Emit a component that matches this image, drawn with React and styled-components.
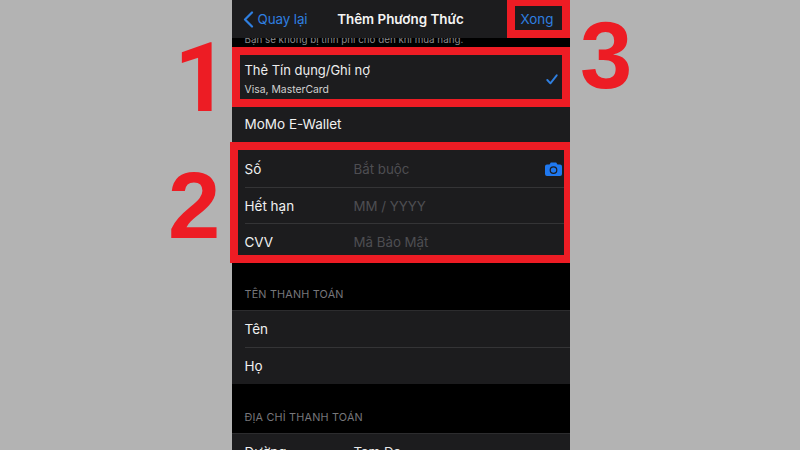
import React from "react";
import styled, { createGlobalStyle } from "styled-components";

const Global = createGlobalStyle`
  html, body { margin: 0; padding: 0; background: #b3b3b3; }
  body { font-family: Inter, "Noto Sans", sans-serif; -webkit-font-smoothing: antialiased; }
`;
const Stage = styled.div`
  position: relative; width: 800px; height: 450px; overflow: hidden;
  display: flex; justify-content: center; background: #b3b3b3;
`;
const Phone = styled.div`
  width: 338px; height: 450px; margin-left: 1px; background: #000; overflow: hidden;
  display: flex; flex-direction: column; flex: none;
`;
const Nav = styled.div`
  height: 38px; flex: none; background: #1c1c1e; display: flex; align-items: center;
  padding: 0 16px 0 11px; justify-content: space-between;
`;
const Back = styled.div`
  display: flex; align-items: center; gap: 4px; color: #2f7fe0; font-size: 13.4px; letter-spacing: -.1px;
`;
const Title = styled.div`
  color: #f4f4f4; font-size: 13.4px; font-weight: 600; margin-right: 27px; white-space: nowrap;
`;
const Done = styled.div`
  color: #2f7fe0; font-size: 13.4px;
`;
const Clip = styled.div`
  height: 9px; flex: none; overflow: hidden; background: #000; padding-left: 13px;
  color: #8a8a8e; font-size: 9.8px; line-height: 9px; white-space: nowrap;
`;
const ClipText = styled.div`
  margin-top: -3px;
`;
const Card = styled.div`
  background: #1c1c1e; flex: none; display: flex; flex-direction: column;
  border-top: ${p => (p.$line ? "1px solid #2c2c2e" : "none")};
`;
const Payment = styled.div`
  height: 58px; padding: 7px 12px 0 13px; display: flex; align-items: center; justify-content: space-between;
  border-bottom: 1px solid #2c2c2e; box-sizing: border-box;
`;
const PaymentText = styled.div`
  display: flex; flex-direction: column; gap: 4px;
`;
const PaymentName = styled.div`
  color: #ededed; font-size: 13px; line-height: 17px; letter-spacing: -.02px;
`;
const PaymentSub = styled.div`
  color: #d0d0d0; font-size: 10.4px; line-height: 13px;
`;
const Row = styled.div`
  height: ${p => p.$h || 37}px; box-sizing: border-box; margin-left: 13px; padding: ${p => p.$pt || 0}px 8px 0 0;
  display: flex; align-items: center; flex: none;
  border-bottom: ${p => (p.$last ? "none" : "1px solid #343436")};
`;
const Label = styled.div`
  width: ${p => (p.$auto ? "auto" : "109px")}; flex: none; color: #f0f0f0; font-size: 13.5px;
`;
const Placeholder = styled.div`
  flex: 1; color: #4e4e52; font-size: 13.3px; white-space: nowrap;
`;
const Value = styled(Placeholder)`
  color: #e8e8e8;
`;
const SectionHead = styled.div`
  flex: none; height: ${p => p.$h}px; box-sizing: border-box; padding: 0 0 8px 13px;
  display: flex; align-items: flex-end; color: #77777b; font-size: 10.8px; line-height: 14px; letter-spacing: .2px;
`;
const Note = styled.div`
  position: absolute; box-sizing: border-box; border: 8px solid #ed1c24;
  border-right-width: ${p => p.$br || 8}px;
  left: ${p => p.$x}px; top: ${p => p.$y}px; width: ${p => p.$w}px; height: ${p => p.$h}px;
`;
const TopNote = styled(Note)`
  border-top-width: 6px;
`;
const Digit = styled.div`
  position: absolute; left: ${p => p.$x}px; top: ${p => p.$y}px;
  color: #ed1c24; font: bold ${p => p.$size || 94}px/98px ${p => p.$font || '"Liberation Sans"'}, Arial, sans-serif;
`;

export default function App() {
  return (
    <Stage>
      <Global />
      <Phone>
        <Nav>
          <Back>
            <svg width="11" height="17" viewBox="0 0 11 17" fill="none">
              <path d="M9 1.500 2 8.500l7 7" stroke="#2f7fe0" strokeWidth="2.2" strokeLinecap="round" strokeLinejoin="round" />
            </svg>
            Quay lại
          </Back>
          <Title>Thêm Phương Thức</Title>
          <Done>Xong</Done>
        </Nav>
        <Clip><ClipText>Bạn sẽ không bị tính phí cho đến khi mua hàng.</ClipText></Clip>
        <Card>
          <Payment>
            <PaymentText>
              <PaymentName>Thẻ Tín dụng/Ghi nợ</PaymentName>
              <PaymentSub>Visa, MasterCard</PaymentSub>
            </PaymentText>
            <svg width="12" height="11" viewBox="0 0 12 11" fill="none">
              <path d="M1.300 6 4.400 9.300 10.700 1.300" stroke="#2f7fe0" strokeWidth="1.900" strokeLinecap="round" strokeLinejoin="round" />
            </svg>
          </Payment>
          <Row $last><Label $auto>MoMo E-Wallet</Label></Row>
          <Row $h={46} $pt={8}>
            <Label>Số</Label>
            <Placeholder>Bắt buộc</Placeholder>
            <svg width="17" height="14" viewBox="0 0 17 14">
              <path fillRule="evenodd" fill="#1f78f0" d="M2 2.500h2.500L5.800.6h5.400l1.300 1.900H15a2 2 0 0 1 2 2V12a2 2 0 0 1-2 2H2a2 2 0 0 1-2-2V4.500a2 2 0 0 1 2-2ZM8.500 4.200a3.900 3.900 0 1 0 0 7.800 3.900 3.900 0 0 0 0-7.800Zm0 1.200a2.700 2.700 0 1 1 0 5.400 2.700 2.700 0 0 1 0-5.400Z" />
            </svg>
          </Row>
          <Row $h={36}><Label>Hết hạn</Label><Placeholder>MM / YYYY</Placeholder></Row>
          <Row $last $h={36}><Label>CVV</Label><Placeholder>Mã Bảo Mật</Placeholder></Row>
        </Card>
        <SectionHead $h={50}>TÊN THANH TOÁN</SectionHead>
        <Card $line>
          <Row><Label>Tên</Label></Row>
          <Row $last $h={36}><Label>Họ</Label></Row>
        </Card>
        <SectionHead $h={49}>ĐỊA CHỈ THANH TOÁN</SectionHead>
        <Card $line>
          <Row><Label>Đường</Label><Value>Tam Đa</Value></Row>
        </Card>
      </Phone>
      <Note $x={232} $y={47} $w={338} $h={60} />
      <Note $x={230} $y={142} $w={340} $h={121} $br={6} />
      <TopNote $x={507} $y={0} $w={63} $h={38} />
      <Digit $x={174} $y={29} $font="Roboto" $size={96}>1</Digit>
      <Digit $x={168} $y={157}>2</Digit>
      <Digit $x={580} $y={7}>3</Digit>
    </Stage>
  );
}
